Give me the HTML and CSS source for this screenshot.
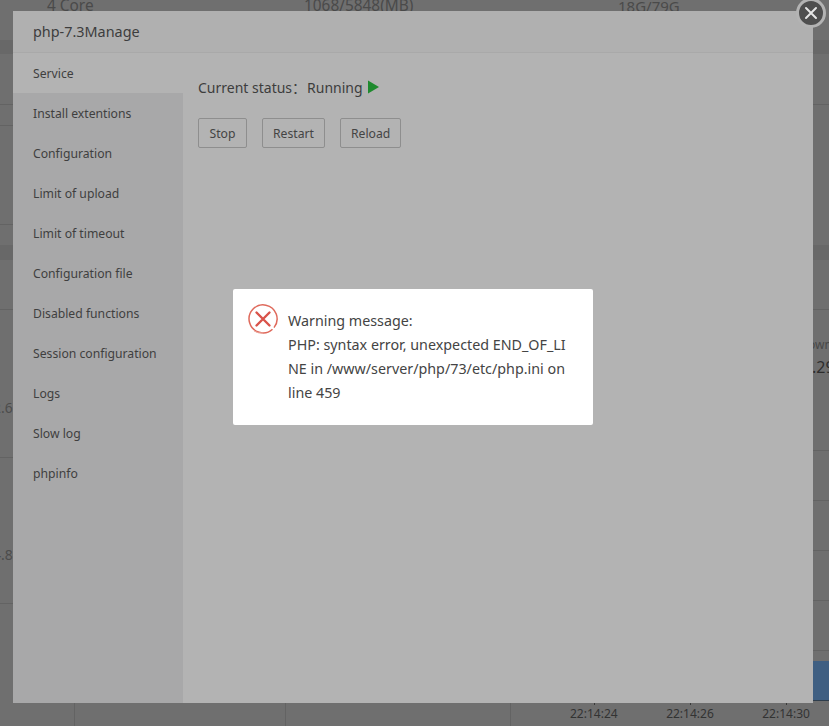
FILE: index.html
```html
<!DOCTYPE html>
<html lang="en">
<head>
<meta charset="utf-8">
<title>php-7.3 Manage</title>
<link rel="stylesheet" href="styles.css">
</head>
<body>
<div class="backdrop">
  <div class="stats">
    <span class="stat stat-core">4 Core</span>
    <span class="stat stat-mem">1068/5848(MB)</span>
    <span class="stat stat-disk">18G/79G</span>
  </div>
  <div class="band band-top"></div>
  <div class="rule rule-a"></div>
  <div class="rule rule-b"></div>
  <div class="rule rule-c"></div>
  <div class="band band-mid"></div>
  <div class="rule rule-d"></div>
  <div class="frag frag-left-a">2.6</div>
  <div class="frag frag-left-b">4.8</div>
  <div class="frag frag-own">own</div>
  <div class="frag frag-num">.29</div>
  <div class="rule rule-e"></div>
  <div class="rule rule-f"></div>
  <div class="rule rule-g"></div>
  <div class="rule rule-h"></div>
  <div class="rule rule-i"></div>
  <div class="rule rule-j"></div>
  <div class="rule rule-k"></div>
  <div class="blue-bar"></div>
  <div class="axis">
    <span class="tick">22:14:24</span><span class="tick">22:14:26</span><span class="tick">22:14:30</span>
  </div>
  <div class="vline vline-a"></div>
  <div class="vline vline-b"></div>
  <div class="vline vline-c"></div>
</div>

<section class="modal">
  <header class="modal-title">php-7.3Manage</header>
  <div class="modal-body">
    <nav class="side">
      <a class="side-item active">Service</a>
      <a class="side-item">Install extentions</a>
      <a class="side-item">Configuration</a>
      <a class="side-item">Limit of upload</a>
      <a class="side-item">Limit of timeout</a>
      <a class="side-item">Configuration file</a>
      <a class="side-item">Disabled functions</a>
      <a class="side-item">Session configuration</a>
      <a class="side-item">Logs</a>
      <a class="side-item">Slow log</a>
      <a class="side-item">phpinfo</a>
    </nav>
    <main class="content">
      <p class="status">
        <span>Current status：</span><span class="running">Running</span>
        <svg class="play" width="11" height="14" viewBox="0 0 11 14"><path d="M0 0.5 L11 7 L0 13.5 Z" fill="#1f8a2e"/></svg>
      </p>
      <div class="actions">
        <button class="btn btn-stop">Stop</button>
        <button class="btn">Restart</button>
        <button class="btn">Reload</button>
      </div>
    </main>
  </div>
</section>

<button class="close" aria-label="Close">
  <svg width="14" height="14" viewBox="0 0 14 14"><path d="M2 2 L12 12 M12 2 L2 12" stroke="#e6e6e6" stroke-width="2" stroke-linecap="round" fill="none"/></svg>
</button>

<div class="dialog">
  <svg class="dialog-icon" width="30" height="30" viewBox="0 0 30 30">
    <path d="M24.5 25.2 A14 14 0 1 1 26 23.6" fill="none" stroke="#df6a5c" stroke-width="1.5"/>
    <path d="M6 27 A14 14 0 0 0 15 29" fill="none" stroke="#eda99f" stroke-width="1"/>
    <path d="M8.5 8.5 L21.5 21.5 M21.5 8.5 L8.5 21.5" stroke="#d9534a" stroke-width="2.4" stroke-linecap="round" fill="none"/>
  </svg>
  <div class="dialog-text">Warning message:<br>PHP: syntax error, unexpected END_OF_LI<br>NE in /www/server/php/73/etc/php.ini on<br>line 459</div>
</div>
</body>
</html>
```
FILE: styles.css
```css
* { box-sizing: border-box; }
html, body { margin: 0; height: 100%; }
body {
  position: relative;
  width: 829px;
  height: 726px;
  overflow: hidden;
  background: #6f6f6f;
  font-family: "Noto Sans", "Noto Sans CJK SC", "Liberation Sans", sans-serif;
  color: #444;
}
.backdrop { position: absolute; inset: 0; overflow: hidden; }
.stat { position: absolute; top: -4px; font-size: 15.4px; color: #4a4a4a; line-height: 20px; }
.stat-core { left: 47px; }
.stat-mem { left: 304px; }
.stat-disk { left: 618px; font-size: 15px; }
.band { position: absolute; left: 0; right: 0; background: #686868; }
.band-top { top: 40px; height: 14px; }
.band-mid { top: 245px; height: 15px; }
.rule { position: absolute; left: 0; right: 0; height: 1px; background: #636363; }
.rule-a { top: 104px; }
.rule-b { top: 125px; right: 600px; }
.rule-c { top: 224px; right: 600px; }
.rule-d { top: 309px; }
.rule-e { top: 457px; right: 600px; }
.rule-f { top: 603px; right: 600px; }
.rule-g { top: 450px; left: 600px; }
.rule-h { top: 500px; left: 600px; }
.rule-i { top: 550px; left: 600px; }
.rule-j { top: 600px; left: 600px; }
.rule-k { top: 650px; left: 600px; }
.frag { position: absolute; white-space: nowrap; }
.frag-left-a { left: -7px; top: 398px; font-size: 14px; color: #4c4c4c; }
.frag-left-b { left: -7px; top: 545px; font-size: 14px; color: #4c4c4c; }
.frag-own { left: 808px; top: 336px; font-size: 12px; color: #484848; }
.frag-num { left: 812px; top: 356px; font-size: 16px; color: #2d2d2d; }
.blue-bar {
  position: absolute;
  left: 813px;
  right: 0;
  top: 661px;
  height: 40px;
  background: #3f5f82;
  border-bottom: 1px solid #2e3d4c;
}
.axis { position: absolute; left: 570px; top: 704px; display: flex; gap: 48.5px; font-size: 12px; color: #333; line-height: 20px; }
.tick { position: relative; white-space: nowrap; }
.tick::before { content: ""; position: absolute; left: 50%; top: -1px; width: 1px; height: 2px; background: #3a3a3a; }
.vline { position: absolute; top: 703px; bottom: 0; width: 1px; background: #636363; }
.vline-a { left: 74px; }
.vline-b { left: 285px; }
.vline-c { left: 510px; }

.modal {
  position: absolute;
  left: 13px;
  top: 11px;
  width: 800px;
  height: 692px;
  background: #b3b3b3;
  display: flex;
  flex-direction: column;
}
.modal-title {
  height: 42px;
  padding-left: 20px;
  line-height: 41px;
  font-size: 14.4px;
  color: #3d3d3d;
  background: #b0b0b0;
  border-bottom: 1px solid #a9a9a9;
  flex: none;
}
.modal-body { flex: 1; display: flex; min-height: 0; }
.side { width: 170px; background: #a8a8a9; flex: none; display: flex; flex-direction: column; }
.side-item { height: 40px; padding-left: 20px; padding-top: 1px; line-height: 40px; font-size: 12.2px; color: #3f3f3f; }
.side-item.active { background: #b3b3b3; }
.content { flex: 1; padding: 23px 15px; }
.status { margin: 0; display: flex; align-items: center; height: 22px; font-size: 14px; color: #3d3d3d; }
.running { margin-left: 1px; }
.play { margin-left: 5px; }
.actions { display: flex; gap: 15px; margin-top: 20px; }
.btn {
  height: 30px;
  padding: 0 10px;
  border: 1px solid #8e8e8e;
  border-radius: 2px;
  background: transparent;
  color: #444;
  font: 12.2px "Noto Sans", "Liberation Sans", sans-serif;
}
.btn-stop { width: 49px; }
.close {
  position: absolute;
  left: 796px;
  top: -2px;
  width: 30px;
  height: 30px;
  border-radius: 50%;
  border: 3px solid #b3b3b3;
  background: #4f4f4f;
  padding: 0;
  display: flex;
  align-items: center;
  justify-content: center;
}
.dialog {
  position: absolute;
  left: 233px;
  top: 289px;
  width: 360px;
  height: 136px;
  background: #fff;
  border-radius: 2px;
  padding: 20px 20px 20px 15px;
  display: flex;
}
.dialog-icon { flex: none; margin-top: -5px; }
.dialog-text { margin-left: 10px; font-size: 14.3px; line-height: 24px; color: #444; white-space: nowrap; }
```
